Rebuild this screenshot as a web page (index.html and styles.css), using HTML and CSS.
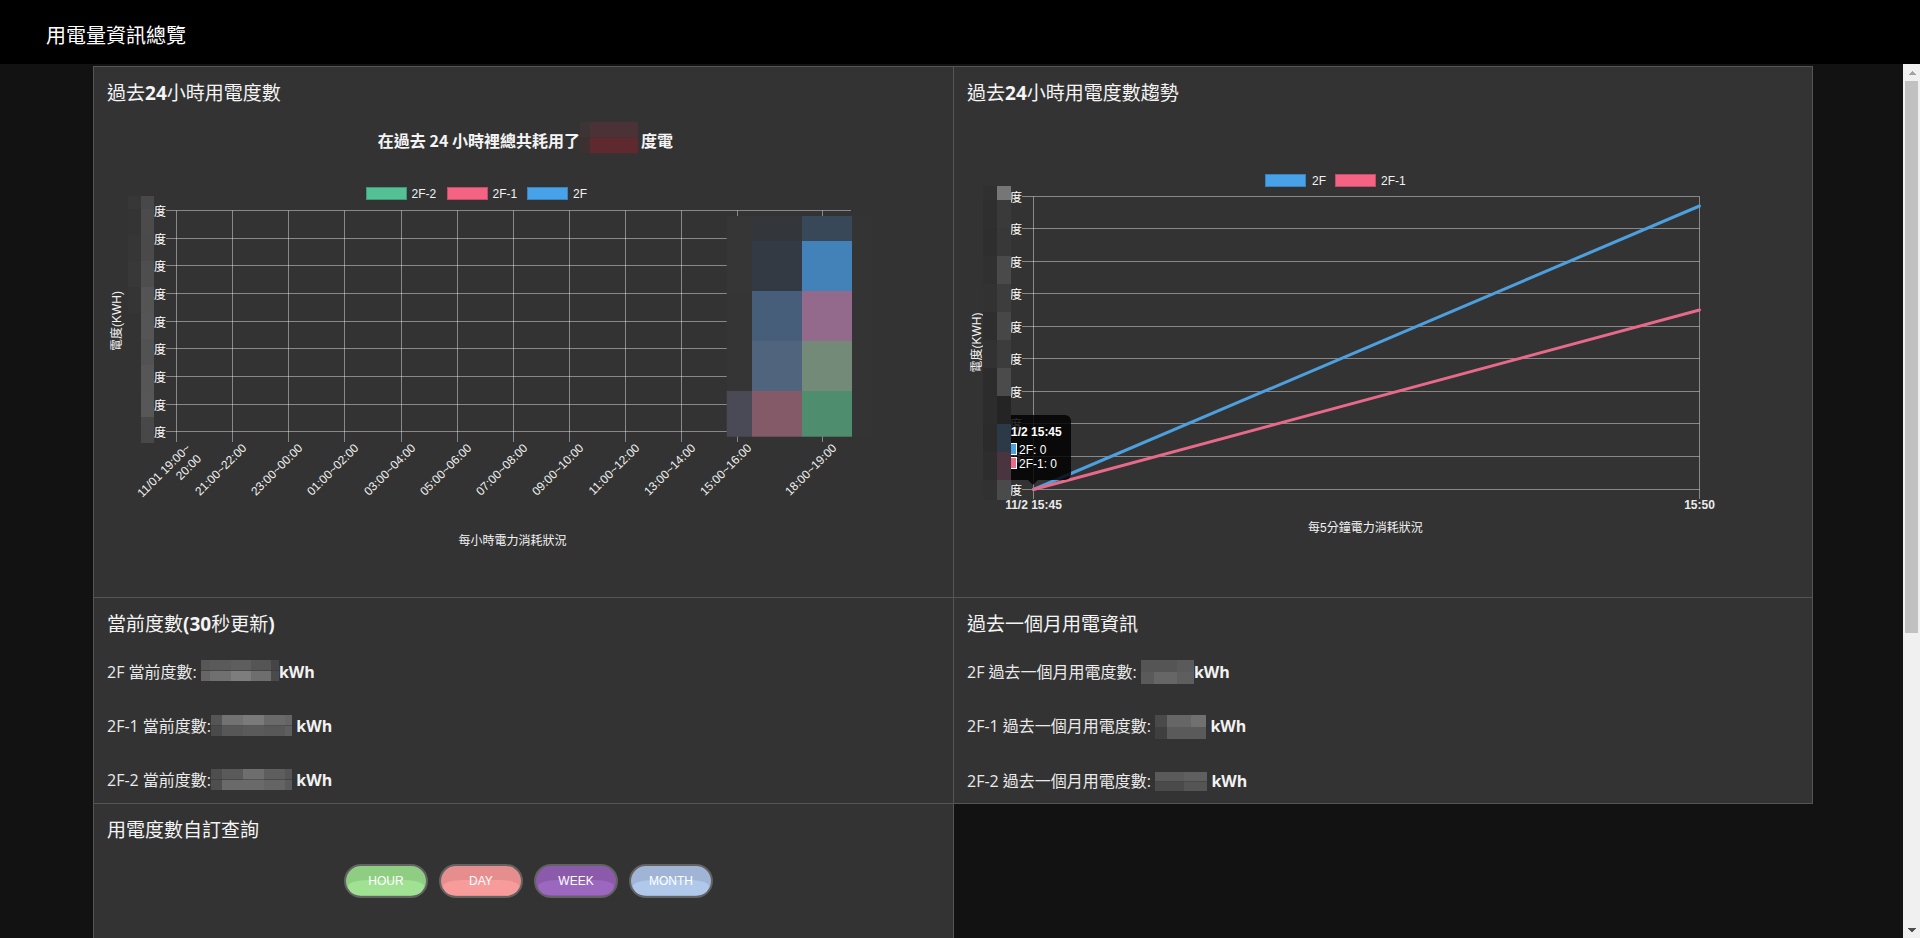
FILE: index.html
```html
<!DOCTYPE html>
<html lang="zh-Hant">
<head>
<meta charset="utf-8">
<title>用電量資訊總覽</title>
<link rel="stylesheet" href="styles.css">
</head>
<body>
<header class="topbar">
  <h1 class="topbar-title">用電量資訊總覽</h1>
</header>
<div class="viewport">
<main class="page-scroll">
  <div class="dashboard">
    <section class="card card-left card-top">
      <h2 class="card-title">過去<b>24</b>小時用電度數</h2>
      <svg class="chart" width="859" height="492" viewBox="0 0 859 492">
        <text class="chart-heading chart-heading-end" x="486" y="35">在過去 24 小時裡總共耗用了</text>
        <rect x="486" y="16.7" width="10" height="16" fill="#3d3436"/>
        <rect x="496" y="16.7" width="48" height="16" fill="#4a3236"/>
        <rect x="486" y="32.7" width="10" height="15.6" fill="#3c3030"/>
        <rect x="496" y="32.7" width="48" height="15.6" fill="#5e2a2f"/>
        <text class="chart-heading" x="547" y="35">度電</text>

        <rect class="legend-box legend-green" x="272.5" y="82.5" width="40" height="12"/>
        <text class="legend-text" x="317.5" y="89">2F-2</text>
        <rect class="legend-box legend-pink" x="353.5" y="82.5" width="40" height="12"/>
        <text class="legend-text" x="398.5" y="89">2F-1</text>
        <rect class="legend-box legend-blue" x="433.5" y="82.5" width="40" height="12"/>
        <text class="legend-text" x="479" y="89">2F</text>

        <g class="grid">
          <line x1="72" x2="757" y1="105.5" y2="105.5"/>
          <line x1="72" x2="757" y1="133.5" y2="133.5"/>
          <line x1="72" x2="757" y1="160.5" y2="160.5"/>
          <line x1="72" x2="757" y1="188.5" y2="188.5"/>
          <line x1="72" x2="757" y1="216.5" y2="216.5"/>
          <line x1="72" x2="757" y1="243.5" y2="243.5"/>
          <line x1="72" x2="757" y1="271.5" y2="271.5"/>
          <line x1="72" x2="757" y1="299.5" y2="299.5"/>
          <line x1="72" x2="757" y1="326.5" y2="326.5"/>
          <line x1="82.5" x2="82.5" y1="105.5" y2="337"/>
          <line x1="138.5" x2="138.5" y1="105.5" y2="337"/>
          <line x1="194.5" x2="194.5" y1="105.5" y2="337"/>
          <line x1="250.5" x2="250.5" y1="105.5" y2="337"/>
          <line x1="307.5" x2="307.5" y1="105.5" y2="337"/>
          <line x1="363.5" x2="363.5" y1="105.5" y2="337"/>
          <line x1="419.5" x2="419.5" y1="105.5" y2="337"/>
          <line x1="475.5" x2="475.5" y1="105.5" y2="337"/>
          <line x1="531.5" x2="531.5" y1="105.5" y2="337"/>
          <line x1="587.5" x2="587.5" y1="105.5" y2="337"/>
          <line x1="643.5" x2="643.5" y1="105.5" y2="337"/>
          <line x1="728.5" x2="728.5" y1="105.5" y2="337"/>
        </g>

        <g class="ytick">
          <text x="72" y="105.5">度</text>
          <text x="72" y="133.5">度</text>
          <text x="72" y="160.5">度</text>
          <text x="72" y="188.5">度</text>
          <text x="72" y="216.5">度</text>
          <text x="72" y="243.5">度</text>
          <text x="72" y="271.5">度</text>
          <text x="72" y="299.5">度</text>
          <text x="72" y="326.5">度</text>
        </g>

        <g>
          <rect x="34" y="91" width="13" height="13" fill="#373737"/>
          <rect x="34" y="104" width="13" height="26" fill="#343434"/>
          <rect x="34" y="130" width="13" height="26" fill="#363636"/>
          <rect x="34" y="156" width="13" height="26" fill="#383838"/>
          <rect x="34" y="182" width="13" height="26" fill="#353535"/>
          <rect x="47" y="91" width="13" height="13" fill="#484848"/>
          <rect x="47" y="104" width="13" height="26" fill="#4b4b4b"/>
          <rect x="47" y="130" width="13" height="26" fill="#4a4a4a"/>
          <rect x="47" y="156" width="13" height="26" fill="#4e4e4e"/>
          <rect x="47" y="182" width="13" height="26" fill="#545454"/>
          <rect x="47" y="208" width="13" height="26" fill="#555555"/>
          <rect x="47" y="234" width="13" height="26" fill="#525252"/>
          <rect x="47" y="260" width="13" height="26" fill="#565656"/>
          <rect x="47" y="286" width="13" height="26" fill="#575757"/>
          <rect x="47" y="312" width="13" height="26" fill="#484848"/>
        </g>

        <text class="axis-title" transform="translate(23 216) rotate(-90)">電度(KWH)</text>

        <g class="xtick">
          <text transform="translate(94.5 341) rotate(-45)">11/01 19:00~</text>
          <text transform="translate(94.5 341) rotate(-45)" y="15">20:00</text>
          <text transform="translate(150.5 341) rotate(-45)">21:00~22:00</text>
          <text transform="translate(206.5 341) rotate(-45)">23:00~00:00</text>
          <text transform="translate(262.5 341) rotate(-45)">01:00~02:00</text>
          <text transform="translate(319.5 341) rotate(-45)">03:00~04:00</text>
          <text transform="translate(375.5 341) rotate(-45)">05:00~06:00</text>
          <text transform="translate(431.5 341) rotate(-45)">07:00~08:00</text>
          <text transform="translate(487.5 341) rotate(-45)">09:00~10:00</text>
          <text transform="translate(543.5 341) rotate(-45)">11:00~12:00</text>
          <text transform="translate(599.5 341) rotate(-45)">13:00~14:00</text>
          <text transform="translate(655.5 341) rotate(-45)">15:00~16:00</text>
          <text transform="translate(740.5 341) rotate(-45)">18:00~19:00</text>
        </g>

        <text class="axis-title" x="418.5" y="436">每小時電力消耗狀況</text>

        <g>
          <rect x="758" y="111" width="20" height="221" fill="#343434"/>
          <rect x="632.7" y="111" width="25.3" height="25" fill="#363636"/>
          <rect x="658" y="111" width="50" height="25" fill="#33373b"/>
          <rect x="708" y="111" width="50" height="25" fill="#384858"/>
          <rect x="632.7" y="136" width="25.3" height="50" fill="#363636"/>
          <rect x="658" y="136" width="50" height="50" fill="#343a44"/>
          <rect x="708" y="136" width="50" height="50" fill="#4282b8"/>
          <rect x="632.7" y="186" width="25.3" height="50" fill="#353535"/>
          <rect x="658" y="186" width="50" height="50" fill="#465e7a"/>
          <rect x="708" y="186" width="50" height="50" fill="#936a8c"/>
          <rect x="632.7" y="236" width="25.3" height="50" fill="#353535"/>
          <rect x="658" y="236" width="50" height="50" fill="#50647e"/>
          <rect x="708" y="236" width="50" height="50" fill="#748a78"/>
          <rect x="632.7" y="286" width="25.3" height="45.7" fill="#4a4a56"/>
          <rect x="658" y="286" width="50" height="45.7" fill="#845a68"/>
          <rect x="708" y="286" width="50" height="45.7" fill="#4e8e6e"/>
        </g>
      </svg>
    </section>

    <section class="card card-top">
      <h2 class="card-title">過去<b>24</b>小時用電度數趨勢</h2>
      <svg class="chart" width="858" height="492" viewBox="0 0 858 492">
        <rect class="legend-box legend-blue" x="311.5" y="69.5" width="40" height="12"/>
        <text class="legend-text" x="358" y="76">2F</text>
        <rect class="legend-box legend-pink" x="381.5" y="69.5" width="40" height="12"/>
        <text class="legend-text" x="427" y="76">2F-1</text>

        <g class="grid">
          <line x1="68" x2="745.5" y1="91.5" y2="91.5"/>
          <line x1="68" x2="745.5" y1="123.5" y2="123.5"/>
          <line x1="68" x2="745.5" y1="156.5" y2="156.5"/>
          <line x1="68" x2="745.5" y1="188.5" y2="188.5"/>
          <line x1="68" x2="745.5" y1="221.5" y2="221.5"/>
          <line x1="68" x2="745.5" y1="253.5" y2="253.5"/>
          <line x1="68" x2="745.5" y1="286.5" y2="286.5"/>
          <line x1="68" x2="745.5" y1="318.5" y2="318.5"/>
          <line x1="68" x2="745.5" y1="351.5" y2="351.5"/>
          <line x1="68" x2="745.5" y1="384.5" y2="384.5"/>
          <line x1="79.5" x2="79.5" y1="91.5" y2="394"/>
          <line x1="745.5" x2="745.5" y1="91.5" y2="394"/>
        </g>

        <g class="ytick">
          <text x="68" y="91.5">度</text>
          <text x="68" y="123.5">度</text>
          <text x="68" y="156.5">度</text>
          <text x="68" y="188.5">度</text>
          <text x="68" y="221.5">度</text>
          <text x="68" y="253.5">度</text>
          <text x="68" y="286.5">度</text>
          <text x="68" y="318.5">度</text>
          <text x="68" y="351.5">度</text>
          <text x="68" y="384.5">度</text>
        </g>

        <text class="axis-title" transform="translate(23 237.5) rotate(-90)">電度(KWH)</text>

        <line class="series series-blue" x1="79.5" y1="384.5" x2="745.5" y2="101"/>
        <line class="series series-pink" x1="79.5" y1="384.5" x2="745.5" y2="205"/>

        <g class="xtick-bold">
          <text x="79.5" y="400">11/2 15:45</text>
          <text x="745.5" y="400">15:50</text>
        </g>
        <text class="axis-title" x="411.4" y="423">每5分鐘電力消耗狀況</text>

        <g>
          <rect class="tooltip-bg" x="45" y="310" width="72" height="65" rx="6"/>
          <polygon class="tooltip-bg" points="74,375 84,375 79,380"/>
          <text class="tooltip-title" x="51" y="327">11/2 15:45</text>
          <rect x="51" y="338" width="12" height="12" fill="#ffffff"/>
          <rect x="52" y="339" width="10" height="10" fill="#4da0e0"/>
          <text class="tooltip-text" x="65" y="344.5">2F: 0</text>
          <rect x="51" y="352" width="12" height="12" fill="#ffffff"/>
          <rect x="52" y="353" width="10" height="10" fill="#ea6a8a"/>
          <text class="tooltip-text" x="65" y="358.5">2F-1: 0</text>
        </g>

        <g>
          <rect x="29" y="81" width="14" height="14" fill="#303030"/>
          <rect x="29" y="95" width="14" height="28" fill="#2f2f2f"/>
          <rect x="29" y="123" width="14" height="28" fill="#2e2e2e"/>
          <rect x="29" y="151" width="14" height="28" fill="#303030"/>
          <rect x="29" y="179" width="14" height="28" fill="#323232"/>
          <rect x="29" y="207" width="14" height="28" fill="#2e2e2e"/>
          <rect x="29" y="235" width="14" height="28" fill="#323232"/>
          <rect x="29" y="263" width="14" height="28" fill="#2c2c2c"/>
          <rect x="29" y="291" width="14" height="28" fill="#2c2c2c"/>
          <rect x="29" y="319" width="14" height="28" fill="#2b2b2b"/>
          <rect x="29" y="347" width="14" height="28" fill="#2d2d2d"/>
          <rect x="29" y="375" width="14" height="20" fill="#313131"/>
          <rect x="43" y="81" width="14" height="14" fill="#767676"/>
          <rect x="43" y="95" width="14" height="28" fill="#3a3a3a"/>
          <rect x="43" y="123" width="14" height="28" fill="#383838"/>
          <rect x="43" y="151" width="14" height="28" fill="#4a4a4a"/>
          <rect x="43" y="179" width="14" height="28" fill="#3d3d3d"/>
          <rect x="43" y="207" width="14" height="28" fill="#474747"/>
          <rect x="43" y="235" width="14" height="28" fill="#3c3c3c"/>
          <rect x="43" y="263" width="14" height="28" fill="#4b4b4b"/>
          <rect x="43" y="291" width="14" height="28" fill="#242424"/>
          <rect x="43" y="319" width="14" height="28" fill="#2c3a48"/>
          <rect x="43" y="347" width="14" height="28" fill="#4a3440"/>
          <rect x="43" y="375" width="14" height="20" fill="#4a4a4a"/>
        </g>
      </svg>
    </section>

    <section class="card card-left">
      <h2 class="card-title">當前度數<b>(30</b>秒更新<b>)</b></h2>
      <div class="readings">
        <p class="reading">2F 當前度數: <span class="blur blur-a"></span><b>kWh</b></p>
        <p class="reading">2F-1 當前度數:<span class="blur blur-b"></span> <b>kWh</b></p>
        <p class="reading">2F-2 當前度數:<span class="blur blur-c"></span> <b>kWh</b></p>
      </div>
    </section>

    <section class="card">
      <h2 class="card-title">過去一個月用電資訊</h2>
      <div class="readings">
        <p class="reading">2F 過去一個月用電度數: <span class="blur blur-d"></span><b>kWh</b></p>
        <p class="reading">2F-1 過去一個月用電度數: <span class="blur blur-e"></span> <b>kWh</b></p>
        <p class="reading">2F-2 過去一個月用電度數: <span class="blur blur-f"></span> <b>kWh</b></p>
      </div>
    </section>

    <section class="card card-left card-query">
      <h2 class="card-title">用電度數自訂查詢</h2>
      <div class="range-buttons">
        <button class="range-btn btn-hour" type="button"><span class="range-label">HOUR</span></button>
        <button class="range-btn btn-day" type="button"><span class="range-label">DAY</span></button>
        <button class="range-btn btn-week" type="button"><span class="range-label">WEEK</span></button>
        <button class="range-btn btn-month" type="button"><span class="range-label">MONTH</span></button>
      </div>
    </section>
  </div>
</main>
<div class="scrollbar" aria-hidden="true">
  <span class="scroll-arrow scroll-up"></span>
  <span class="scroll-thumb"></span>
  <span class="scroll-track"></span>
  <span class="scroll-arrow scroll-down"></span>
</div>
</div>
</body>
</html>
```

FILE: styles.css
```css
html, body {
  margin: 0;
  padding: 0;
  height: 100%;
}

body {
  background: #121212;
  color: #f0f0f0;
  font-family: "Open Sans", "Noto Sans CJK TC", sans-serif;
  overflow: hidden;
}

.topbar {
  height: 64px;
  background: #000;
  display: flex;
  align-items: center;
  padding: 6px 0 0 46px;
  box-sizing: border-box;
}

.topbar-title {
  margin: 0;
  font-family: "Noto Sans CJK TC", sans-serif;
  font-weight: normal;
  font-size: 20px;
  line-height: 24px;
  color: #fff;
}

.viewport {
  display: flex;
  height: calc(100vh - 64px);
}

.page-scroll {
  flex: 1;
  min-width: 0;
  overflow-y: auto;
  box-sizing: border-box;
  padding: 2px 0 58px 93px;
  background: #121212;
  scrollbar-width: none;
}

.page-scroll::-webkit-scrollbar {
  display: none;
}

.scrollbar {
  flex: none;
  width: 17px;
  background: #f0f0f0;
  display: flex;
  flex-direction: column;
}

.scroll-arrow {
  display: block;
  height: 17px;
  flex: none;
  background-repeat: no-repeat;
  background-position: center;
  background-size: 8px 4px;
}

.scroll-up {
  background-image: conic-gradient(from 135deg at 50% 0, #a3a3a3 0 90deg, transparent 90deg);
}

.scroll-down {
  background-image: conic-gradient(from -45deg at 50% 100%, #505050 0 90deg, transparent 90deg);
}

.scroll-thumb {
  display: block;
  flex: none;
  height: 552px;
  margin: 0 2px;
  background: #c1c1c1;
}

.scroll-track {
  display: block;
  flex: 1;
}

.dashboard {
  display: grid;
  grid-template-columns: 861px 859px;
  grid-template-rows: 532px 206px 532px;
  width: 1720px;
}

.card {
  background: #333;
  border-right: 1px solid #555;
  border-bottom: 1px solid #555;
  box-sizing: border-box;
  min-width: 0;
}

.card-left {
  border-left: 1px solid #555;
}

.card-top {
  border-top: 1px solid #555;
}

.card-title {
  margin: 0;
  padding: 13px 13px 0;
  height: 38px;
  box-sizing: border-box;
  font-family: "Noto Sans CJK TC", sans-serif;
  font-size: 19px;
  line-height: 24px;
  font-weight: normal;
  color: #f4f4f4;
  white-space: nowrap;
}

.card-title b {
  font-family: "Open Sans", sans-serif;
  font-weight: bold;
}

.chart {
  display: block;
}

.chart text {
  font-family: "Liberation Sans", "Noto Sans CJK TC", sans-serif;
  font-size: 12px;
  fill: #fff;
  dominant-baseline: central;
}

.chart .chart-heading {
  font-family: "Noto Sans CJK TC", sans-serif;
  font-size: 16px;
  font-weight: bold;
  fill: #f4f4f4;
}

.chart .chart-heading-end {
  text-anchor: end;
}

.legend-box {
  stroke-width: 1;
}

.legend-green {
  fill: #54c094;
  stroke: #3e9a74;
}

.legend-pink {
  fill: #f46384;
  stroke: #c24d68;
}

.legend-blue {
  fill: #48a2e8;
  stroke: #3a82bc;
}

.chart .legend-text {
  fill: #f2f2f2;
}

.grid line {
  stroke: rgba(255, 255, 255, 0.42);
  stroke-width: 1;
}

.chart .ytick text {
  text-anchor: end;
  font-family: "Noto Sans CJK TC", sans-serif;
}

.chart .axis-title {
  text-anchor: middle;
  fill: #f2f2f2;
}

.chart .xtick text {
  text-anchor: end;
  fill: #f0f0f0;
}

.chart .xtick-bold text {
  text-anchor: middle;
  font-weight: bold;
  fill: #eaeaea;
}

.series {
  stroke-width: 3;
  stroke-linecap: round;
}

.series-blue {
  stroke: #4d9fde;
}

.series-pink {
  stroke: #e8698a;
}

.tooltip-bg {
  fill: rgba(0, 0, 0, 0.82);
}

.chart .tooltip-title {
  font-weight: bold;
}

.readings {
  padding: 24px 13px 11px;
}

.reading {
  margin: 0 0 30px;
  font-size: 16px;
  line-height: 24px;
  color: #eaeaea;
  white-space: nowrap;
}

.reading:last-child {
  margin-bottom: 0;
}

.reading b {
  font-weight: bold;
  color: #f2f2f2;
}

.blur {
  display: inline-block;
  vertical-align: top;
  height: 21px;
  margin-top: 1px;
  background-repeat: no-repeat;
  background-size: 100% 50%;
  background-position: top, bottom;
}

.blur-a {
  width: 78px;
  margin-top: 0;
  background-image:
    linear-gradient(90deg, #575757 0 12%, #5a5a5a 12% 38%, #5e5e5e 38% 64%, #555 64% 90%, #454545 90%),
    linear-gradient(90deg, #666 0 12%, #707070 12% 38%, #7d7d7d 38% 64%, #6e6e6e 64% 90%, #4a4a4a 90%);
}

.blur-b {
  width: 81px;
  background-image:
    linear-gradient(90deg, #555 0 14%, #727272 14% 40%, #7a7a7a 40% 66%, #6a6a6a 66% 91%, #666 91%),
    linear-gradient(90deg, #4a4a4a 0 14%, #575757 14% 40%, #5a5a5a 40% 66%, #585858 66% 91%, #5e5e5e 91%);
}

.blur-c {
  width: 81px;
  background-image:
    linear-gradient(90deg, #4e4e4e 0 14%, #5a5a5a 14% 40%, #6e6e6e 40% 66%, #5e5e5e 66% 91%, #555 91%),
    linear-gradient(90deg, #4e4e4e 0 14%, #6a6a6a 14% 40%, #6a6a6a 40% 66%, #646464 66% 91%, #5a5a5a 91%);
}

.blur-d {
  width: 53px;
  height: 24px;
  margin-top: 0;
  background-image:
    linear-gradient(90deg, #555 0 24%, #555 24% 67%, #5a5a5a 67%),
    linear-gradient(90deg, #5a5a5a 0 24%, #666 24% 67%, #5e5e5e 67%);
}

.blur-e {
  width: 51px;
  height: 24px;
  margin-top: 1px;
  background-image:
    linear-gradient(90deg, #4a4a4a 0 24%, #666 24% 70%, #707070 70%),
    linear-gradient(90deg, #3f3f3f 0 24%, #5a5a5a 24% 70%, #5a5a5a 70%);
}

.blur-f {
  width: 52px;
  height: 19px;
  margin-top: 3px;
  background-image:
    linear-gradient(90deg, #5a5a5a 0 55%, #5f5f5f 55%),
    linear-gradient(90deg, #4a4a4a 0 55%, #555 55%);
}

.range-buttons {
  display: flex;
  justify-content: center;
  gap: 11px;
  margin-top: 22px;
  padding-left: 10px;
}

.range-btn {
  position: relative;
  width: 84px;
  height: 34px;
  padding: 0;
  border: 2px solid #626262;
  border-radius: 17px;
  box-sizing: border-box;
  overflow: hidden;
  font-family: "Liberation Sans", sans-serif;
  font-size: 12px;
  color: #fff;
  cursor: pointer;
}

.range-btn::before {
  content: "";
  position: absolute;
  left: 2px;
  right: 2px;
  bottom: 1px;
  height: 50%;
  border-radius: 40% 40% 14px 14px / 60% 60% 14px 14px;
}

.range-label {
  position: relative;
  line-height: 30px;
}

.btn-hour {
  background: #8fcd83;
}

.btn-hour::before {
  background: #a0e194;
}

.btn-day {
  background: #e68e8e;
}

.btn-day::before {
  background: #f79b9b;
}

.btn-week {
  background: #8b5aab;
}

.btn-week::before {
  background: #9b67bf;
}

.btn-month {
  background: #a0b5d6;
}

.btn-month::before {
  background: #b0c9ea;
}
```
